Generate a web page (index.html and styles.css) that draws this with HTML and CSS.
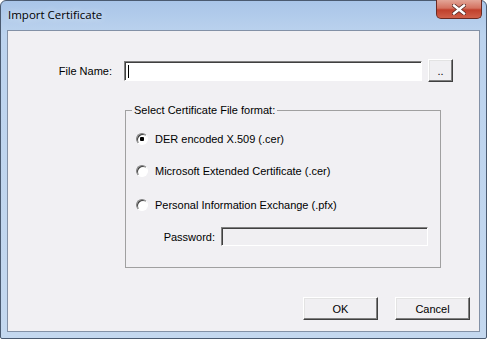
FILE: index.html
```html
<!DOCTYPE html>
<html lang="en">
<head>
  <meta charset="UTF-8">
  <title>Import Certificate</title>
  <link rel="stylesheet" href="styles.css">
</head>
<body>
  <div class="window">
    <div class="titlebar">
      <span class="title">Import Certificate</span>
      <div class="close">
        <svg width="14" height="11" viewBox="0 0 14 11">
          <path d="M2 1.5 L12 9.5 M12 1.5 L2 9.5" stroke="#5a2a24" stroke-width="4" stroke-linecap="square"/>
          <path d="M2 1.5 L12 9.5 M12 1.5 L2 9.5" stroke="#fff" stroke-width="2.4" stroke-linecap="square"/>
        </svg>
      </div>
    </div>

    <div class="client">
      <div class="file-row">
        <label class="label file-label">File Name:</label>
        <div class="field file-field"><span class="caret"></span></div>
        <button class="btn browse">..</button>
      </div>

      <fieldset class="group">
        <legend>Select Certificate File format:</legend>
        <label class="radio-row first">
          <span class="radio checked"></span>
          <span>DER encoded X.509 (.cer)</span>
        </label>
        <label class="radio-row">
          <span class="radio"></span>
          <span>Microsoft Extended Certificate (.cer)</span>
        </label>
        <label class="radio-row">
          <span class="radio"></span>
          <span>Personal Information Exchange (.pfx)</span>
        </label>
        <div class="pass-row">
          <span class="label pass-label">Password:</span>
          <div class="field pass-field"></div>
        </div>
      </fieldset>

      <div class="actions">
        <button class="btn action">OK</button>
        <button class="btn action">Cancel</button>
      </div>
    </div>
  </div>
</body>
</html>
```

FILE: styles.css
```css
body {
  margin: 0;
  background: #fff;
  font-family: "Liberation Sans", Arial, sans-serif;
  font-size: 11px;
  color: #000;
}
.window {
  width: 487px;
  height: 339px;
  box-sizing: border-box;
  border: 1px solid #4a5a70;
  border-radius: 6px 6px 2px 2px;
  background: linear-gradient(180deg, #a9c5e8 0%, #bcd3ee 10%, #c4d8ef 100%);
  display: flex;
  flex-direction: column;
  padding: 0 6px 6px 6px;
}
.titlebar {
  height: 29px;
  display: flex;
  align-items: flex-start;
  justify-content: space-between;
}
.title {
  font-family: "Open Sans", "Noto Sans", sans-serif;
  font-size: 11.5px;
  margin: 6px 0 0 1px;
  color: #000;
  text-shadow: 0 0 6px #e8f0fa;
}
.close {
  width: 46px;
  height: 19px;
  margin-top: -1px;
  margin-right: -2px;
  box-sizing: border-box;
  border: 1px solid #6b2a22;
  border-top: none;
  border-radius: 0 0 5px 5px;
  background: linear-gradient(180deg, #e3a597 0%, #d47260 45%, #c0402c 55%, #d0604a 100%);
  display: flex;
  align-items: center;
  justify-content: center;
}
.client {
  flex: 1;
  border: 1px solid #8391a6;
  background: #f1f0f3;
  padding: 28px 9px 0 0;
}
.file-row {
  display: flex;
  align-items: center;
}
.label {
  text-align: right;
}
.file-label {
  width: 104px;
  margin-right: 12px;
}
.field {
  box-sizing: border-box;
  border: 1px solid;
  border-color: #808080 #fff #fff #808080;
  box-shadow: inset 1px 1px #404040;
}
.file-field {
  width: 298px;
  height: 20px;
  background: #fff;
  padding: 3px 0 0 3px;
}
.caret {
  display: block;
  width: 1px;
  height: 13px;
  background: #000;
}
.btn {
  font-family: "Liberation Sans", Arial, sans-serif;
  font-size: 11px;
  color: #000;
  background: #f0eff2;
  border: 1px solid;
  border-color: #fff #404040 #404040 #fff;
  box-shadow: inset -1px -1px #808080, inset 1px 1px #e3e3e3;
  padding: 0;
}
.browse {
  width: 25px;
  height: 23px;
  margin-left: 6px;
  line-height: 16px;
}
.group {
  margin: 22px 0 0 117px;
  width: 316px;
  box-sizing: border-box;
  border: 1px solid #a0a0a0;
  padding: 14px 0 21px 10px;
}
.group legend {
  padding: 0 2px;
  margin-left: -4px;
  line-height: 13px;
}
.radio-row {
  display: flex;
  align-items: center;
  height: 16px;
  margin-top: 16px;
}
.radio-row.first {
  margin-top: 0;
}
.radio-row:nth-of-type(3) {
  margin-top: 18px;
}
.radio {
  width: 12px;
  height: 12px;
  box-sizing: border-box;
  border-radius: 50%;
  border: 1px solid;
  border-color: #808080 #fff #fff #808080;
  box-shadow: inset 1px 1px #404040;
  background: #fff;
  margin-right: 7px;
}
.radio.checked {
  background: radial-gradient(circle, #000 0 2px, #fff 2.5px);
}
.pass-row {
  display: flex;
  align-items: center;
  margin-top: 14px;
}
.pass-label {
  width: 79px;
  margin-right: 6px;
}
.pass-field {
  width: 207px;
  height: 19px;
  background: #f0eff2;
}
.actions {
  display: flex;
  justify-content: flex-end;
  gap: 17px;
  margin-top: 29px;
}
.action {
  width: 75px;
  height: 23px;
}
```
